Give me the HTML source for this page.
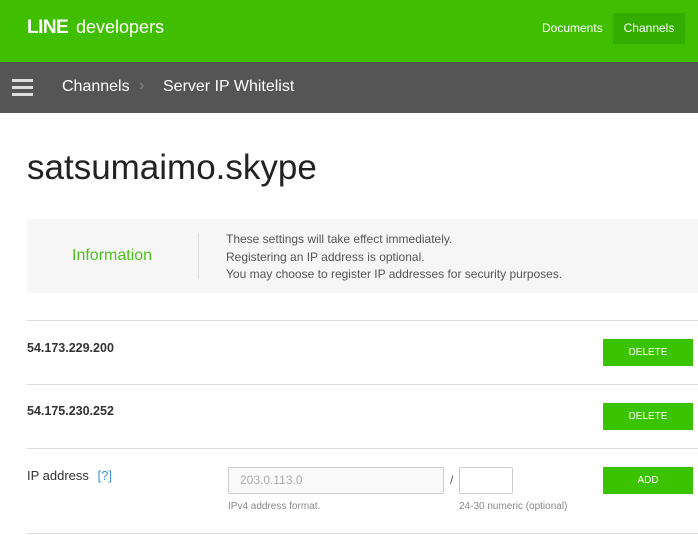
<!DOCTYPE html>
<html><head><style>
*{margin:0;padding:0;box-sizing:border-box}
body{width:698px;height:535px;overflow:hidden;background:#fff;font-family:"Liberation Sans",Arial,sans-serif;position:relative}
.a{position:absolute}
.btn{position:absolute;left:603px;width:90px;height:27px;background:#3bc300;color:#fff;font-size:10px;text-align:center;line-height:27px}
.hr{position:absolute;left:27px;width:671px;height:1px;background:#ddd}
</style></head><body>
<div class="a" style="left:0;top:0;width:698px;height:62px;background:#40bf00"></div>
<div class="a" style="left:27px;top:17px;color:#fff;font-size:19px;font-weight:bold;letter-spacing:-0.5px">LINE</div>
<div class="a" style="left:76px;top:17px;color:#fff;font-size:18px">developers</div>
<div class="a" style="left:542px;top:21px;color:#fff;font-size:12px">Documents</div>
<div class="a" style="left:613px;top:13px;width:72px;height:31px;background:#33ad00;color:#fff;font-size:12px;text-align:center;line-height:31px">Channels</div>
<div class="a" style="left:0;top:62px;width:698px;height:51px;background:#555"></div>
<div class="a" style="left:12px;top:79px;width:21px;height:3px;background:#ddd;box-shadow:0 7px 0 #ddd,0 14px 0 #ddd"></div>
<div class="a" style="left:62px;top:78px;color:#fff;font-size:16px">Channels</div>
<div class="a" style="left:139px;top:77px;color:#888;font-size:16px">&#x203A;</div>
<div class="a" style="left:163px;top:78px;color:#fff;font-size:16px">Server IP Whitelist</div>
<div class="a" style="left:27px;top:148px;color:#222;font-size:35px">satsumaimo.skype</div>
<div class="a" style="left:27px;top:219px;width:671px;height:74px;background:#f6f6f6"></div>
<div class="a" style="left:72px;top:247px;color:#4fbf1f;font-size:16px">Information</div>
<div class="a" style="left:198px;top:233px;width:1px;height:46px;background:#ddd"></div>
<div class="a" style="left:226px;top:231px;color:#555;font-size:12px;line-height:17.6px">These settings will take effect immediately.<br>Registering an IP address is optional.<br>You may choose to register IP addresses for security purposes.</div>
<div class="hr" style="top:320px"></div>
<div class="a" style="left:27px;top:341px;color:#333;font-size:12.5px;font-weight:bold">54.173.229.200</div>
<div class="btn" style="top:339px">DELETE</div>
<div class="hr" style="top:384px"></div>
<div class="a" style="left:27px;top:404px;color:#333;font-size:12.5px;font-weight:bold">54.175.230.252</div>
<div class="btn" style="top:403px">DELETE</div>
<div class="hr" style="top:448px"></div>
<div class="a" style="left:27px;top:468px;color:#333;font-size:13px">IP address <span style="color:#3a8fd0;margin-left:5px">[?]</span></div>
<div class="a" style="left:228px;top:467px;width:216px;height:27px;border:1px solid #ccc;border-radius:2px;background:#fafafa;color:#aaa;font-size:12px;line-height:25px;padding-left:11px">203.0.113.0</div>
<div class="a" style="left:450px;top:473px;color:#555;font-size:12px">/</div>
<div class="a" style="left:459px;top:467px;width:54px;height:27px;border:1px solid #ccc;border-radius:2px;background:#fff"></div>
<div class="a" style="left:228px;top:501px;color:#888;font-size:10px">IPv4 address format.</div>
<div class="a" style="left:459px;top:501px;color:#888;font-size:10px">24-30 numeric (optional)</div>
<div class="btn" style="top:467px">ADD</div>
<div class="hr" style="top:533px"></div>
</body></html>
